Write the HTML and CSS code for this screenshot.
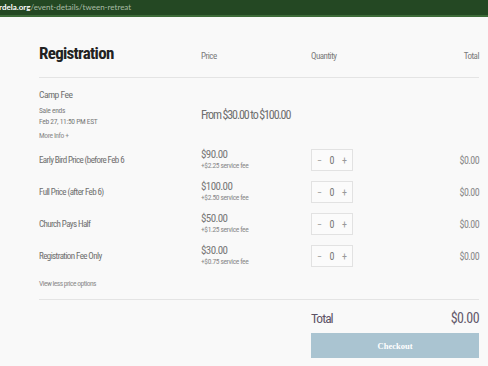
FILE: index.html
```html
<!DOCTYPE html>
<html>
<head>
    <meta name="viewport" content="width=device-width, initial-scale=1.0">
    <link rel="stylesheet" href="styles.css">
</head>
<body>
    <div class="url-bar">
        <span class="domain">rdela.org</span><span class="path">/event-details/tween-retreat</span>
    </div>

    <div class="page">
        <div class="grid head-row">
            <h1>Registration</h1>
            <div class="col-label">Price</div>
            <div class="col-label">Quantity</div>
            <div class="col-label right">Total</div>
        </div>

        <div class="grid camp">
            <div class="camp-info">
                <div class="camp-name">Camp Fee</div>
                <div class="sale">Sale ends<br>Feb 27, 11:50 PM EST</div>
                <div class="more">More Info +</div>
            </div>
            <div class="range">From $30.00 to $100.00</div>
        </div>

        <div class="grid ticket">
            <div class="t-name">Early Bird Price (before Feb 6</div>
            <div class="t-price">$90.00<span class="fee">+$2.25 service fee</span></div>
            <div class="qty"><span>&minus;</span><span class="num">0</span><span>+</span></div>
            <div class="t-total">$0.00</div>
        </div>
        <div class="grid ticket">
            <div class="t-name">Full Price (after Feb 6)</div>
            <div class="t-price">$100.00<span class="fee">+$2.50 service fee</span></div>
            <div class="qty"><span>&minus;</span><span class="num">0</span><span>+</span></div>
            <div class="t-total">$0.00</div>
        </div>
        <div class="grid ticket">
            <div class="t-name">Church Pays Half</div>
            <div class="t-price">$50.00<span class="fee">+$1.25 service fee</span></div>
            <div class="qty"><span>&minus;</span><span class="num">0</span><span>+</span></div>
            <div class="t-total">$0.00</div>
        </div>
        <div class="grid ticket">
            <div class="t-name">Registration Fee Only</div>
            <div class="t-price">$30.00<span class="fee">+$0.75 service fee</span></div>
            <div class="qty"><span>&minus;</span><span class="num">0</span><span>+</span></div>
            <div class="t-total">$0.00</div>
        </div>

        <div class="view-less">View less price options</div>

        <div class="grid summary">
            <div></div>
            <div></div>
            <div class="sum-label">Total</div>
            <div class="sum-value">$0.00</div>
        </div>
        <div class="grid checkout-row">
            <div></div>
            <div></div>
            <button class="checkout">Checkout</button>
        </div>
    </div>
</body>
</html>
```

FILE: styles.css
```css
html, body {
    margin: 0;
    padding: 0;
    background: #f9f9f9;
    font-family: "Roboto Condensed", "Open Sans", sans-serif;
    font-stretch: condensed;
    color: #6e6e6e;
}

.url-bar {
    height: 15px;
    background: #244823;
    border-bottom: 2px solid #3d6b38;
    font-family: Lato, "Open Sans", sans-serif;
    font-stretch: normal;
    font-size: 8px;
    line-height: 15px;
    white-space: nowrap;
    overflow: hidden;
}

.url-bar .domain {
    color: #fff;
    font-weight: bold;
    margin-left: -1px;
}

.url-bar .path {
    color: #a9bca5;
}

.page {
    width: 440px;
    margin-left: 39px;
}

.grid {
    display: grid;
    grid-template-columns: 162px 110px 1fr auto;
    align-items: center;
}

.head-row {
    height: 61px;
    border-bottom: 1px solid #e4e4e4;
    align-items: baseline;
    align-content: end;
    padding-bottom: 14px;
    box-sizing: border-box;
}

h1 {
    margin: 0;
    font-size: 17px;
    line-height: 20px;
    font-weight: bold;
    color: #222;
    letter-spacing: -0.7px;
}

.col-label {
    font-size: 9px;
    letter-spacing: -0.5px;
    color: #7a7a7a;
}

.right {
    text-align: right;
}

.camp {
    padding-top: 11px;
    height: 66px;
    box-sizing: border-box;
    align-items: start;
}

.camp-name {
    font-size: 9.5px;
    line-height: 12px;
    letter-spacing: -0.5px;
}

.sale {
    margin-top: 5px;
    font-size: 7.5px;
    line-height: 10.5px;
    letter-spacing: -0.3px;
    color: #7a7a7a;
}

.more {
    margin-top: 4px;
    font-size: 7.5px;
    line-height: 10px;
    letter-spacing: -0.4px;
    color: #8a8a8a;
}

.range {
    grid-column: 2 / 4;
    margin-top: 19px;
    font-size: 12px;
    letter-spacing: -1.1px;
}

.ticket {
    height: 32px;
}

.t-name {
    font-size: 9px;
    letter-spacing: -0.6px;
}

.t-price {
    font-size: 11px;
    line-height: 12px;
    letter-spacing: -0.6px;
    color: #777;
}

.fee {
    display: block;
    font-size: 7.5px;
    line-height: 10px;
    letter-spacing: -0.4px;
    color: #888;
}

.qty {
    width: 42px;
    height: 22px;
    border: 1px solid #e2e2e2;
    background: #fbfbfb;
    display: flex;
    justify-content: space-between;
    align-items: center;
    font-size: 10px;
    color: #999;
    padding: 0 5px;
    box-sizing: border-box;
}

.qty .num {
    color: #777;
}

.t-total {
    font-size: 10px;
    letter-spacing: -0.6px;
    color: #8a8a8a;
    text-align: right;
}

.view-less {
    padding-top: 7px;
    height: 28px;
    font-size: 7.5px;
    line-height: 10px;
    letter-spacing: -0.5px;
    color: #8a8a8a;
    border-bottom: 1px solid #e4e4e4;
    box-sizing: border-box;
}

.summary {
    height: 31px;
    padding-top: 2px;
}

.sum-label {
    font-size: 13.5px;
    letter-spacing: -1px;
    color: #5d5366;
}

.sum-value {
    font-size: 14px;
    letter-spacing: -0.6px;
    color: #64596c;
    text-align: right;
}

.checkout-row {
    grid-template-columns: 162px 110px 1fr;
}

.checkout {
    height: 25px;
    border: none;
    background: #aac4d1;
    color: #fff;
    font-family: "Liberation Serif", serif;
    font-weight: bold;
    font-size: 8.5px;
    cursor: pointer;
}
```
